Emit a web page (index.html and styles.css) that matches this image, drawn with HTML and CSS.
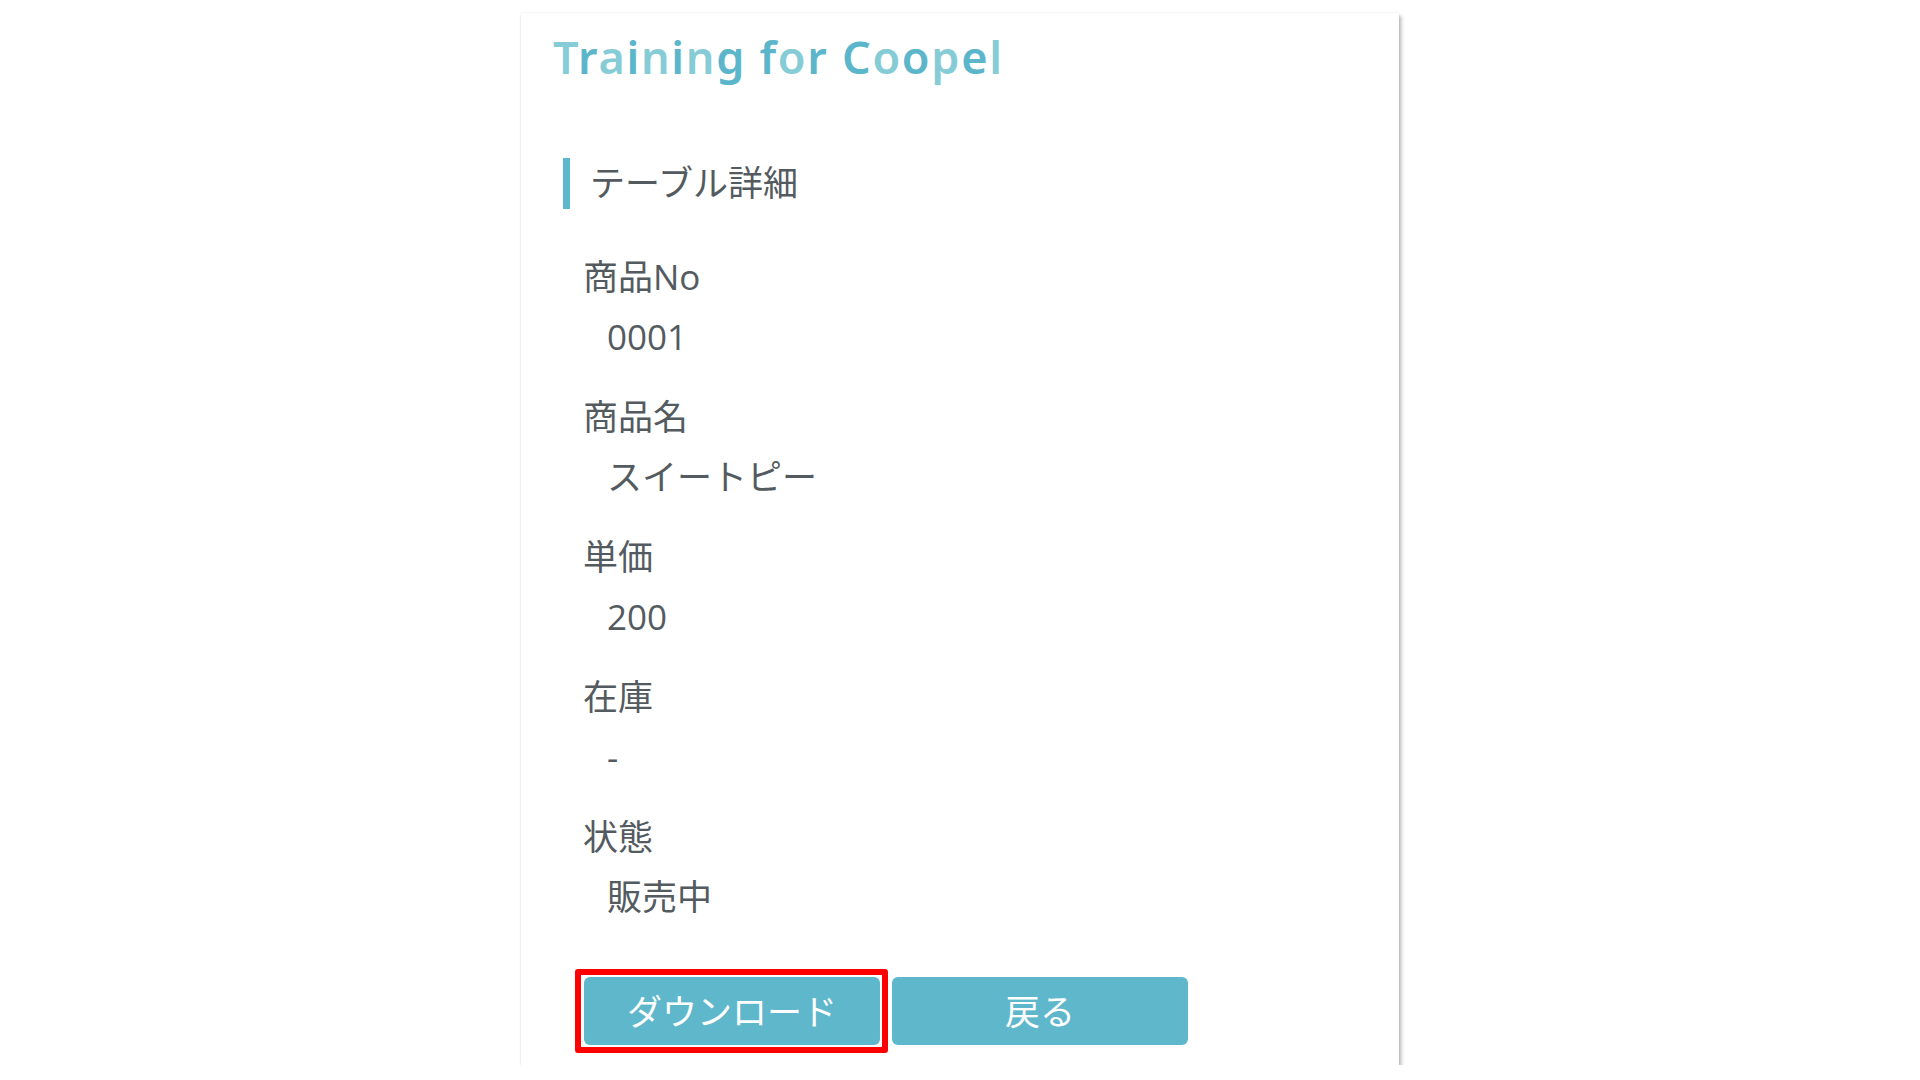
FILE: index.html
```html
<!DOCTYPE html>
<html lang="ja">
<head>
<meta charset="utf-8">
<title>Training for Coopel</title>
<link rel="stylesheet" href="styles.css">
</head>
<body>
<main class="card">
  <h1 class="title"><span class="l">T</span><span class="d">r</span><span class="l">a</span><span class="d">i</span><span class="l">n</span><span class="d">i</span><span class="l">n</span><span class="d">g</span><span class="l"> </span><span class="d">f</span><span class="l">o</span><span class="d">r</span><span class="l"> </span><span class="d">C</span><span class="l">o</span><span class="d">o</span><span class="l">p</span><span class="d">e</span><span class="l">l</span></h1>
  <h2 class="section">テーブル詳細</h2>
  <dl class="fields">
    <div class="field"><dt>商品No</dt><dd>0001</dd></div>
    <div class="field"><dt>商品名</dt><dd>スイートピー</dd></div>
    <div class="field"><dt>単価</dt><dd>200</dd></div>
    <div class="field"><dt>在庫</dt><dd>-</dd></div>
    <div class="field"><dt>状態</dt><dd>販売中</dd></div>
  </dl>
  <div class="actions">
    <button class="btn btn-marked" type="button">ダウンロード</button>
    <button class="btn" type="button">戻る</button>
  </div>
</main>
</body>
</html>
```

FILE: styles.css
```css
html, body {
  margin: 0;
  padding: 0;
  background: #ffffff;
}

body {
  font-family: "Open Sans", "Noto Sans CJK JP", sans-serif;
  color: #535b60;
}

.card {
  box-sizing: border-box;
  width: 878px;
  height: 1052px;
  margin: 13px auto 0;
  padding: 14px 32px 20px;
  background: #ffffff;
  box-shadow: 2px 3px 4px rgba(0, 0, 0, 0.3), 0 0 2px rgba(0, 0, 0, 0.08);
}

.title {
  margin: 0;
  font-family: "Noto Sans", sans-serif;
  font-weight: 600;
  font-size: 45px;
  line-height: 60px;
  letter-spacing: 1.7px;
  white-space: pre;
}

.title .l { color: #86ccd6; }
.title .d { color: #5bb5cb; }

.section {
  box-sizing: border-box;
  margin: 71px 0 0 10px;
  padding: 0 0 6px 20px;
  border-left: 7px solid #5eb8cc;
  font-family: "Noto Sans CJK JP", sans-serif;
  font-weight: 400;
  font-size: 35px;
  line-height: 45px;
  height: 51px;
}

.fields {
  margin: 43px 0 0 30px;
  padding: 0;
  display: flex;
  flex-direction: column;
  gap: 30px;
}

.field dt,
.field dd {
  margin: 0;
  font-size: 35px;
  line-height: 50px;
}

.field dd {
  margin-top: 10px;
  padding-left: 24px;
}

.actions {
  margin: 55px 0 0 31px;
  display: flex;
  gap: 12px;
}

.btn {
  position: relative;
  width: 296px;
  height: 68px;
  padding: 0 0 3px;
  border: none;
  border-radius: 6px;
  background: #5eb7ca;
  color: #ffffff;
  font-family: "Noto Sans CJK JP", sans-serif;
  font-size: 35px;
  line-height: 65px;
}

.btn-marked::after {
  content: "";
  position: absolute;
  top: -8px;
  left: -9px;
  right: -8px;
  bottom: -8px;
  border: 6px solid #ff0000;
  border-radius: 3px;
}
```
